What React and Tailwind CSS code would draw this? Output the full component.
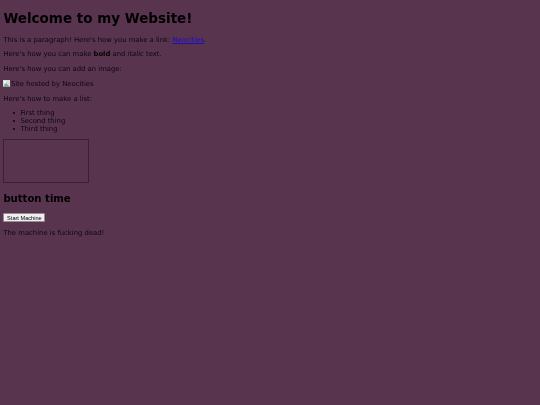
export default function App() {
  return (
    <div className="min-h-[405px] bg-[#58344f] px-[3.375px] py-[0.1px] text-[6.83px] leading-[8px] text-[#0d0612] font-['DejaVu_Sans',sans-serif]">
      <div className="blur-[0.3px]">
        <h1 className="mt-[10px] mb-[9.5px] text-[13.5px] leading-[16px] font-bold text-black">Welcome to my Website!</h1>
        <p className="my-[6.75px]">This is a paragraph! Here's how you make a link: <a href="#" className="text-[#1a0ac8] underline">Neocities</a>.</p>
        <p className="my-[6.75px]">Here's how you can make <strong className="font-bold text-black">bold</strong> and <em className="italic">italic</em> text.</p>
        <p className="my-[6.75px]">Here's how you can add an image:</p>
        <p className="my-[6.75px] flex items-center">
          <svg width="7" height="7" viewBox="0 0 7 7" className="shrink-0">
            <rect width="7" height="7" fill="#d8dde0" />
            <path d="M0 7 L3 3 L7 7 Z" fill="#7fa883" />
            <rect x="1" y="1" width="2" height="2" fill="#f4f6f7" />
          </svg>
          <span className="ml-[0.5px]">Site hosted by Neocities</span>
        </p>
        <p className="my-[6.75px]">Here's how to make a list:</p>
        <ul className="mt-[6.75px] mb-[5.5px] flex flex-col pl-[10px]">
          <li className="flex items-center gap-[5px]"><span className="h-[2px] w-[2px] rounded-full bg-[#0d0612]" />First thing</li>
          <li className="flex items-center gap-[5px]"><span className="h-[2px] w-[2px] rounded-full bg-[#0d0612]" />Second thing</li>
          <li className="flex items-center gap-[5px]"><span className="h-[2px] w-[2px] rounded-full bg-[#0d0612]" />Third thing</li>
        </ul>
        <div className="h-[44px] w-[86px] border border-[#38203c]" />
        <h2 className="mt-[10px] mb-[8.5px] text-[10.1px] leading-[12px] font-bold text-black">button time</h2>
        <button className="block h-[9px] w-[42px] rounded-[1px] border-[0.5px] border-[#8f8f8f] bg-[#f0eef0] text-center font-['Liberation_Sans',sans-serif] text-[5.6px] leading-[8px] text-black">Start Machine</button>
        <p className="my-[7px]">The machine is fucking dead!</p>
      </div>
    </div>
  );
}
